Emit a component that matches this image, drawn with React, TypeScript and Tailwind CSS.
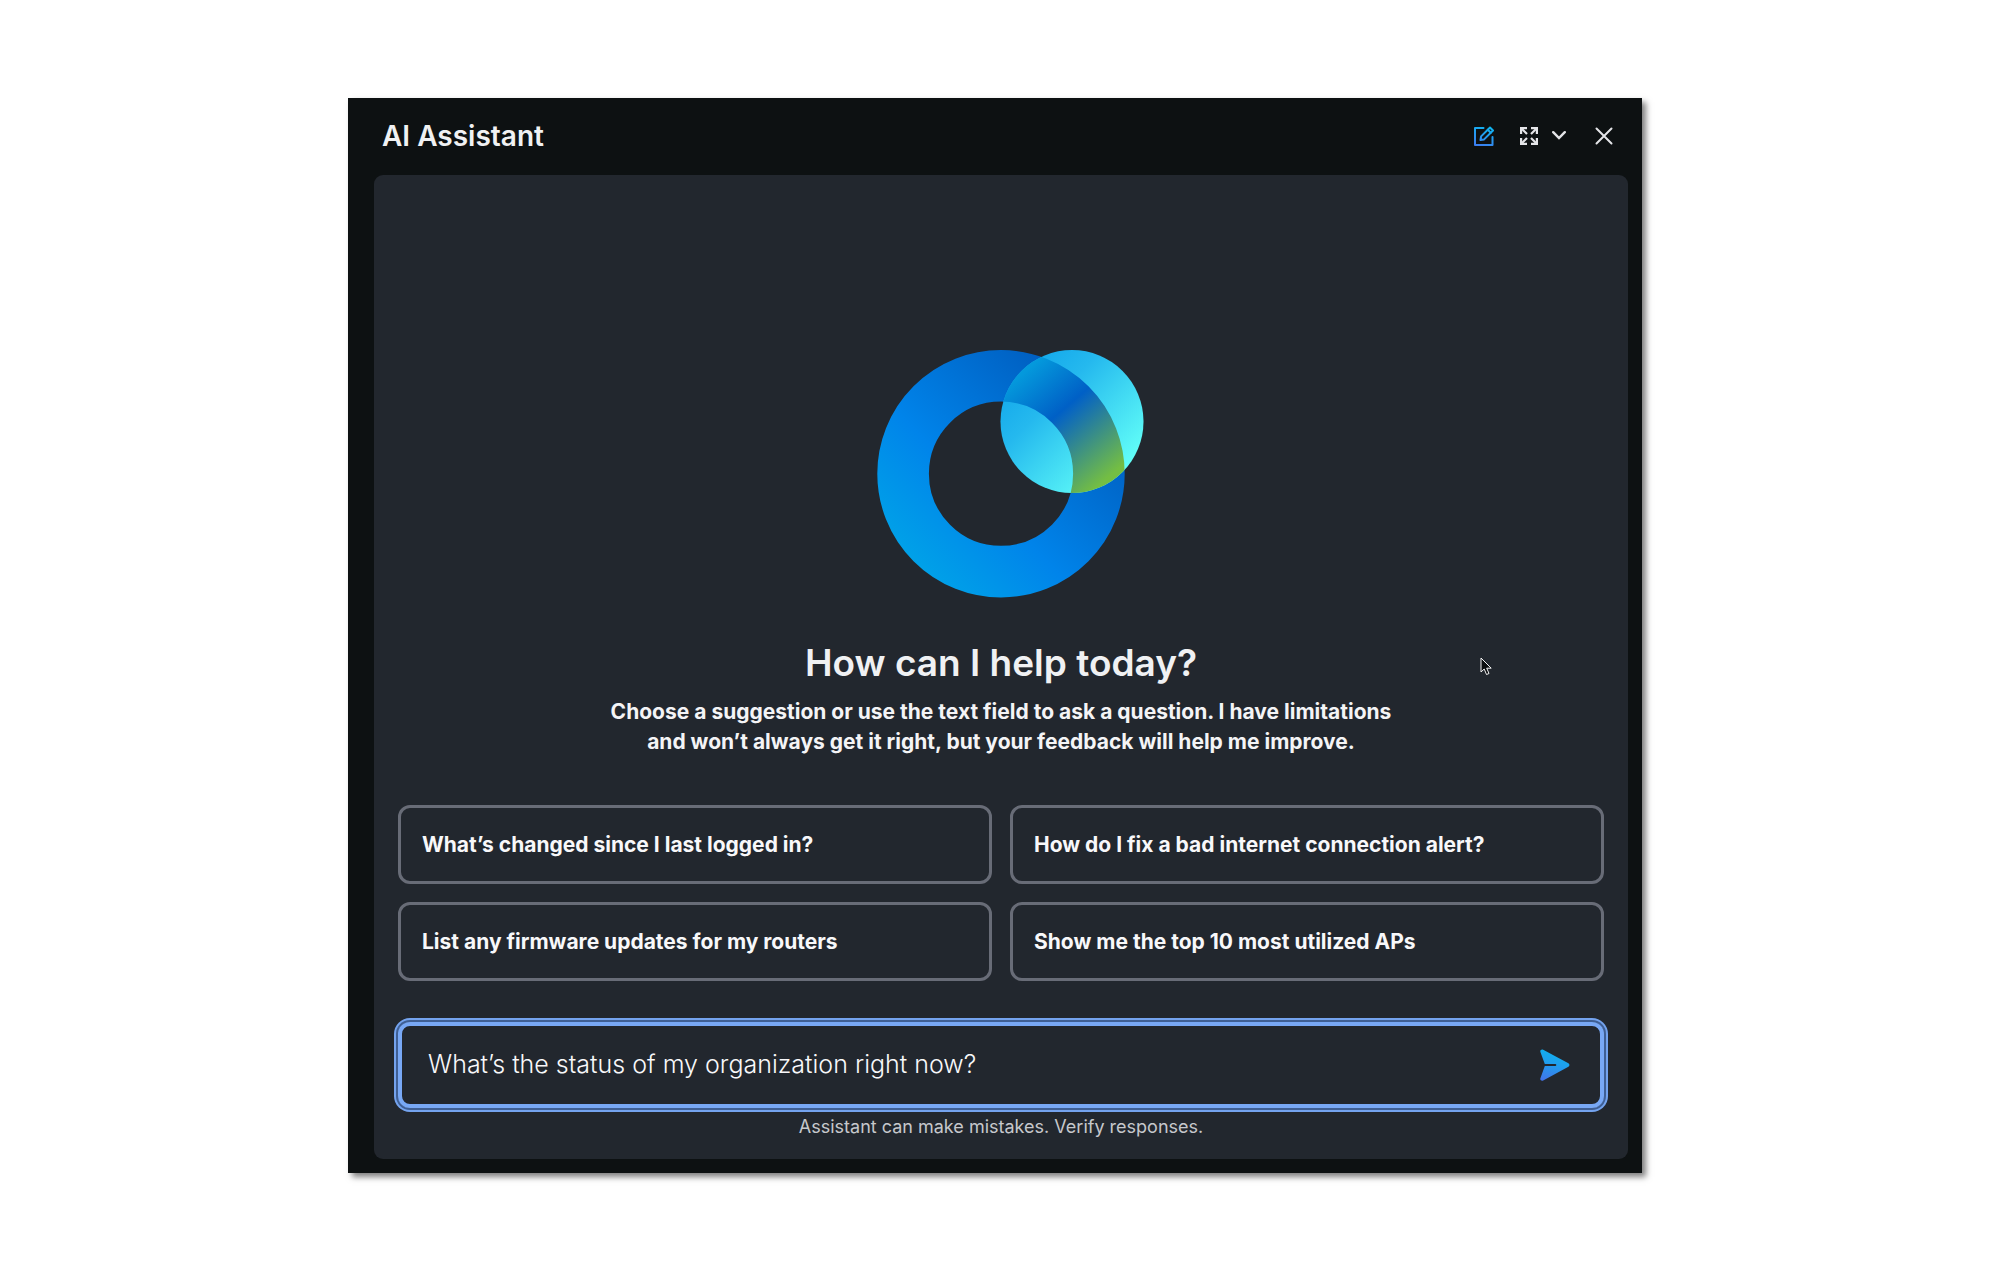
import { useState, FormEvent } from 'react';

const suggestions = [
  'What’s changed since I last logged in?',
  'How do I fix a bad internet connection alert?',
  'List any firmware updates for my routers',
  'Show me the top 10 most utilized APs',
];

function AssistantLogo() {
  return (
    <svg viewBox="0 0 288 248" className="w-[288px] h-[248px]" aria-hidden="true">
      <defs>
        <linearGradient id="ring" gradientUnits="userSpaceOnUse" x1="52" y1="216" x2="220" y2="48">
          <stop offset="0" stopColor="#00a3e8" />
          <stop offset="0.42" stopColor="#0084ea" />
          <stop offset="1" stopColor="#0060c2" />
        </linearGradient>
        <linearGradient id="bubble" gradientUnits="userSpaceOnUse" x1="164" y1="21" x2="265" y2="122">
          <stop offset="0" stopColor="#14a9eb" />
          <stop offset="0.3" stopColor="#25b9ee" />
          <stop offset="1" stopColor="#62fff8" />
        </linearGradient>
        <linearGradient id="overlap" gradientUnits="userSpaceOnUse" x1="160" y1="28" x2="252" y2="136">
          <stop offset="0" stopColor="#0499dc" />
          <stop offset="0.38" stopColor="#0060c6" />
          <stop offset="0.43" stopColor="#0b68bd" />
          <stop offset="0.95" stopColor="#74be43" />
        </linearGradient>
        <clipPath id="bubbleClip">
          <circle cx="215" cy="71.500" r="71.5" />
        </clipPath>
      </defs>
      <circle cx="144" cy="123.700" r="97.9" fill="none" stroke="url(#ring)" strokeWidth="51.6" />
      <circle cx="215" cy="71.500" r="71.5" fill="url(#bubble)" />
      <g clipPath="url(#bubbleClip)">
        <circle cx="144" cy="123.700" r="97.9" fill="none" stroke="url(#overlap)" strokeWidth="51.6" />
      </g>
    </svg>
  );
}

function ComposeIcon() {
  return (
    <svg viewBox="0 0 20 20" className="w-5 h-5" fill="none" stroke="url(#compose)" strokeWidth="2" strokeLinejoin="round" strokeLinecap="round">
      <defs>
        <linearGradient id="compose" gradientUnits="userSpaceOnUse" x1="12" y1="0" x2="5" y2="20">
          <stop offset="0" stopColor="#0fb5f0" />
          <stop offset="1" stopColor="#3c7ef0" />
        </linearGradient>
      </defs>
      <path d="M9.500 2H1v17h17.500V11" />
      <path d="M6.500 14l.6-3.600L16 1.500l3 3L10.100 13.400z" />
      <path d="M13.800 3.700l3 3" />
    </svg>
  );
}

function ExpandIcon() {
  return (
    <svg viewBox="0 0 18 18" className="w-[18px] h-[18px]" fill="none" stroke="#e4e5e8" strokeWidth="2.200">
      <path d="M1.100 7V1.100H7M11 1.100h5.900V7M16.900 11v5.900H11M7 16.900H1.100V11" />
      <path d="M1.500 1.500L7 7M16.500 1.500L11 7M16.500 16.500L11 11M1.500 16.500L7 11" />
    </svg>
  );
}

function SendIcon() {
  return (
    <svg viewBox="0 0 30 32" className="w-[30px] h-8">
      <defs>
        <linearGradient id="send" gradientUnits="userSpaceOnUse" x1="14" y1="2" x2="6" y2="32">
          <stop offset="0" stopColor="#10b0ee" />
          <stop offset="0.4" stopColor="#1f9fee" />
          <stop offset="1" stopColor="#4274e8" />
        </linearGradient>
      </defs>
      <path
        fill="url(#send)"
        d="M3.200.7 28.400 14.300a2 2 0 0 1 0 3.500L3.200 31.400C1.500 32.200-.2 30.900.4 29.200L4.800 17h10.500a1 1 0 0 0 0-2H4.800L.4 2.900C-.2 1.200 1.500-.2 3.200.7z"
      />
    </svg>
  );
}

function Pointer() {
  return (
    <svg viewBox="0 0 12 19" className="w-3 h-[19px]" aria-hidden="true">
      <path d="M1 1v14l3.200-3 2.300 5.500 2.500-1-2.300-5.300h4.500z" fill="#0b0d0f" stroke="#f4f4f4" />
    </svg>
  );
}

export default function App() {
  const [message, setMessage] = useState('What’s the status of my organization right now?');

  const handleSubmit = (e: FormEvent) => {
    e.preventDefault();
  };

  return (
    <main className="min-h-screen bg-white pt-[98px] pb-[108px] pr-[10px] font-['Inter',sans-serif]">
      <section className="mx-auto w-full max-w-[1294px] bg-[#0d1112] pl-[26px] pr-[14px] pb-[14px] shadow-[4px_4px_6px_rgba(0,0,0,0.5)]">
        <header className="flex h-[77px] items-center justify-between pl-2 pr-[15px] pb-[2px]">
          <h1 className="text-[28px] leading-8 font-semibold text-[#f0f1f3]">AI Assistant</h1>
          <div className="flex items-center text-[#e4e5e8]">
            <button aria-label="New chat" className="mr-[26px]">
              <ComposeIcon />
            </button>
            <button aria-label="Expand" className="flex items-center gap-[14px] mr-[29px]">
              <ExpandIcon />
              <svg viewBox="0 0 14 9" className="w-[14px] h-[9px]" fill="none" stroke="currentColor" strokeWidth="2.400" strokeLinecap="round">
                <path d="M1.200 1.200L7 7l5.800-5.800" />
              </svg>
            </button>
            <button aria-label="Close">
              <svg viewBox="0 0 18 18" className="w-[18px] h-[18px]" fill="none" stroke="currentColor" strokeWidth="2" strokeLinecap="round">
                <path d="M1.500 1.500l15 15M16.500 1.500l-15 15" />
              </svg>
            </button>
          </div>
        </header>

        <div className="relative flex flex-col items-center rounded-[9px] bg-[#22272e] px-6 pt-[175px] pb-[20px]">
          <AssistantLogo />
          <h2 className="mt-[41px] text-[37px] leading-12 font-semibold text-[#f0f1f3]">How can I help today?</h2>
          <p className="mt-[10px] max-w-[840px] text-center text-[21px] leading-[30px] font-bold text-[#f4f4f6]">
            Choose a suggestion or use the text field to ask a question. I have limitations
            <br />
            and won’t always get it right, but your feedback will help me improve.
          </p>

          <div className="mt-12 grid w-full grid-cols-2 gap-[18px]">
            {suggestions.map((text) => (
              <button
                key={text}
                onClick={() => setMessage(text)}
                className="h-[79px] rounded-xl border-3 border-[#686c77] px-[21px] text-left text-[21px] font-bold text-[#f8f8fa]"
              >
                {text}
              </button>
            ))}
          </div>

          <form
            onSubmit={handleSubmit}
            className="mt-[41px] flex h-[86px] w-full items-center rounded-xl border-4 border-[#78a8f5] pl-[26px] pr-[30px] shadow-[0_0_0_2px_#3f5f94,0_0_0_4px_#74a3ee]"
          >
            <input
              aria-label="Message"
              value={message}
              onChange={(e) => setMessage(e.target.value)}
              className="min-w-0 flex-1 bg-transparent text-[25px] font-light text-[#f8f8fa] outline-none"
            />
            <button aria-label="Send" type="submit">
              <SendIcon />
            </button>
          </form>
          <p className="mt-[7px] text-[18px] leading-6 text-[#c6c8cc]">Assistant can make mistakes. Verify responses.</p>

          <div className="absolute top-[482px] right-[136px]">
            <Pointer />
          </div>
        </div>
      </section>
    </main>
  );
}
